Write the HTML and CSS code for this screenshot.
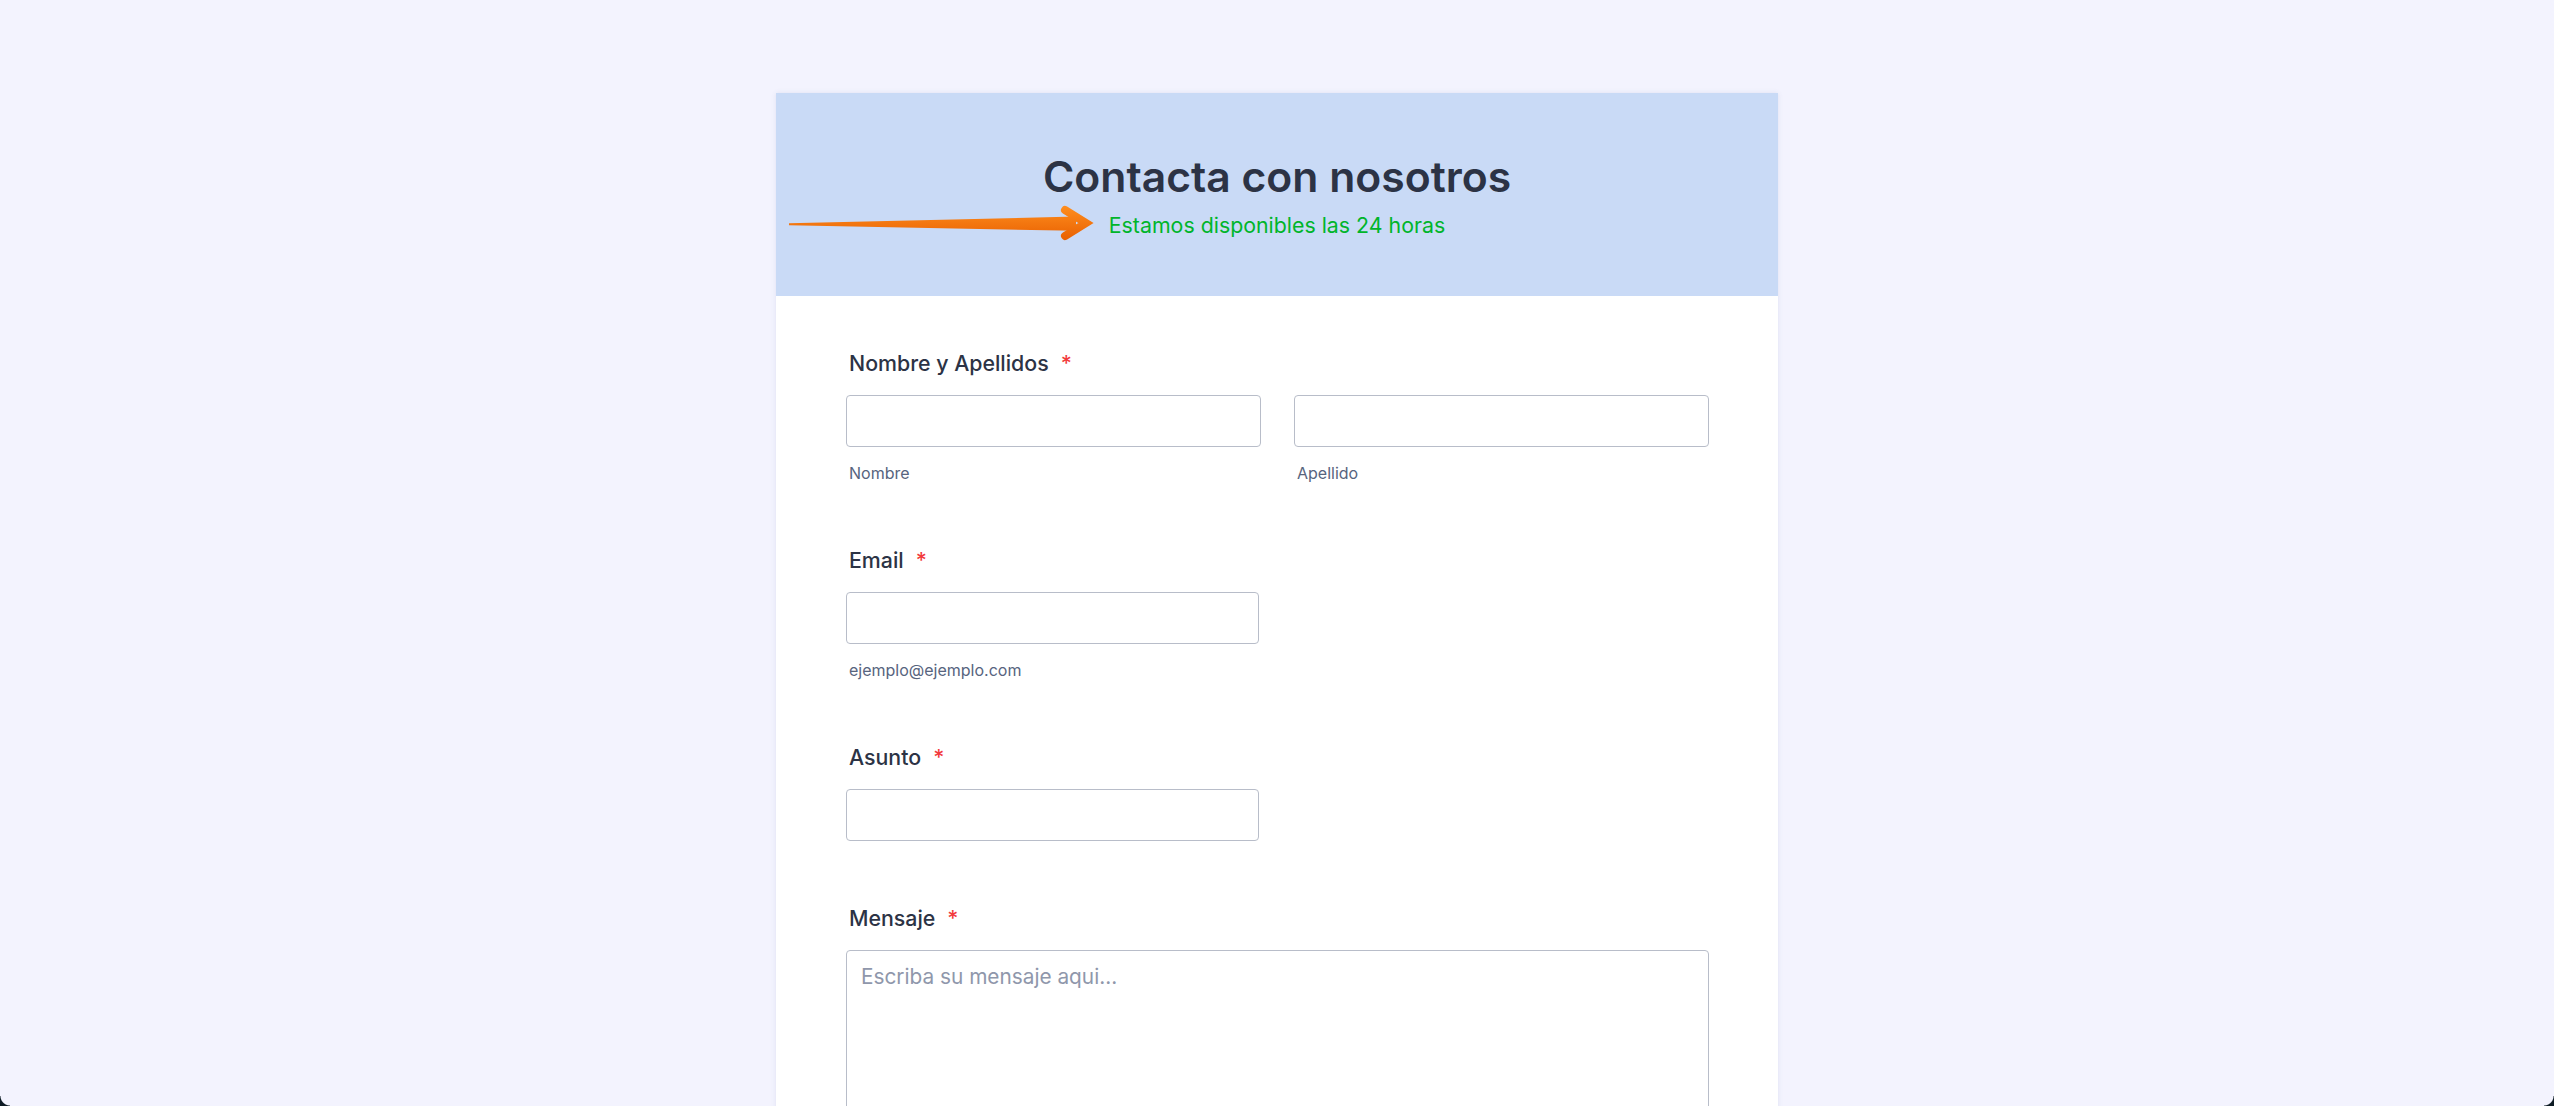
FILE: index.html
```html
<!DOCTYPE html>
<html lang="es">
<head>
<meta charset="utf-8">
<title>Contacta con nosotros</title>
<link rel="stylesheet" href="styles.css">
</head>
<body>
<div class="page">
  <div class="card">
    <header class="card-header">
      <svg class="arrow" width="340" height="60" viewBox="0 0 340 60" aria-hidden="true">
        <defs>
          <linearGradient id="og" x1="0" y1="12" x2="0" y2="48" gradientUnits="userSpaceOnUse">
            <stop offset="0" stop-color="#ff8f1f"/>
            <stop offset="1" stop-color="#e85f00"/>
          </linearGradient>
        </defs>
        <path d="M13 30.2 L300 23.6 L300 37.8 L13 32.2 Z" fill="url(#og)"/>
        <path d="M289 17 L310 30 L289 43" fill="none" stroke="url(#og)" stroke-width="8" stroke-linecap="round" stroke-linejoin="miter"/>
      </svg>
      <h1 class="title">Contacta con nosotros</h1>
      <p class="subtitle">Estamos disponibles las 24 horas</p>
    </header>
    <form class="card-body">
      <div class="field">
        <label class="label">Nombre y Apellidos<span class="req">*</span></label>
        <div class="row">
          <div class="col">
            <input class="input" type="text">
            <span class="sublabel">Nombre</span>
          </div>
          <div class="col">
            <input class="input" type="text">
            <span class="sublabel">Apellido</span>
          </div>
        </div>
      </div>
      <div class="field">
        <label class="label">Email<span class="req">*</span></label>
        <div class="col half">
          <input class="input" type="email">
          <span class="sublabel">ejemplo@ejemplo.com</span>
        </div>
      </div>
      <div class="field">
        <label class="label">Asunto<span class="req">*</span></label>
        <div class="col half">
          <input class="input" type="text">
        </div>
      </div>
      <div class="field">
        <label class="label">Mensaje<span class="req">*</span></label>
        <textarea class="textarea" placeholder="Escriba su mensaje aqui..."></textarea>
      </div>
    </form>
  </div>
</div>
<div class="corner corner-left"></div>
<div class="corner corner-right"></div>
</body>
</html>
```

FILE: styles.css
```css
html, body {
  margin: 0;
  padding: 0;
  height: 100%;
  overflow: hidden;
}

body {
  background: #f3f3fe;
  font-family: "Inter", "Noto Sans", "Liberation Sans", sans-serif;
  color: #2c3345;
}

.page {
  padding-top: 93px;
  display: flex;
  justify-content: center;
}

.card {
  width: 1002px;
  background: #ffffff;
  box-shadow: 0 0 5px rgba(87, 100, 160, 0.12);
  flex: none;
}

.card-header {
  position: relative;
  background: #c9daf6;
  padding: 58px 40px 58px;
  text-align: center;
}

.arrow {
  position: absolute;
  left: 0;
  top: 100px;
}

.title {
  margin: 0;
  font-size: 42.67px;
  line-height: 52px;
  font-weight: 600;
  color: #2c3345;
}

.subtitle {
  margin: 9px 0 0;
  font-size: 21.33px;
  line-height: 26px;
  font-weight: 400;
  color: #00b52a;
}

.card-body {
  padding: 54px 69px 0 70px;
  display: flex;
  flex-direction: column;
  gap: 64px;
}

.field {
  display: flex;
  flex-direction: column;
}

.label {
  font-size: 21.33px;
  line-height: 26px;
  font-weight: 500;
  color: #2c3345;
  margin-bottom: 19px;
  padding-left: 3px;
}

.req {
  color: #f23a3c;
  margin-left: 12px;
}

.row {
  display: flex;
  gap: 33px;
}

.col {
  display: flex;
  flex-direction: column;
  width: 415px;
}

.col.half {
  width: 413px;
}

.input {
  box-sizing: border-box;
  width: 100%;
  height: 52px;
  margin: 0;
  border: 1px solid #b8bdc9;
  border-radius: 4px;
  background: #ffffff;
  font-family: inherit;
  font-size: 21.33px;
  padding: 0 14px;
}

.sublabel {
  margin-top: 16px;
  padding-left: 3px;
  font-size: 16px;
  line-height: 20px;
  color: #57647e;
}

.textarea {
  box-sizing: border-box;
  width: 100%;
  height: 260px;
  margin: 0;
  border: 1px solid #b8bdc9;
  border-radius: 4px;
  padding: 13px 14px;
  font-family: inherit;
  font-size: 20.8px;
  line-height: 26px;
  resize: none;
  color: #2c3345;
}

.textarea::placeholder {
  color: #8f97ab;
}

.corner {
  position: fixed;
  bottom: 0;
  width: 10px;
  height: 10px;
}

.corner-left {
  left: 0;
  background: radial-gradient(circle at 100% 0, transparent 9px, #0d1b24 10px);
}

.corner-right {
  right: 0;
  background: radial-gradient(circle at 0 0, transparent 9px, #0d1b24 10px);
}
```
